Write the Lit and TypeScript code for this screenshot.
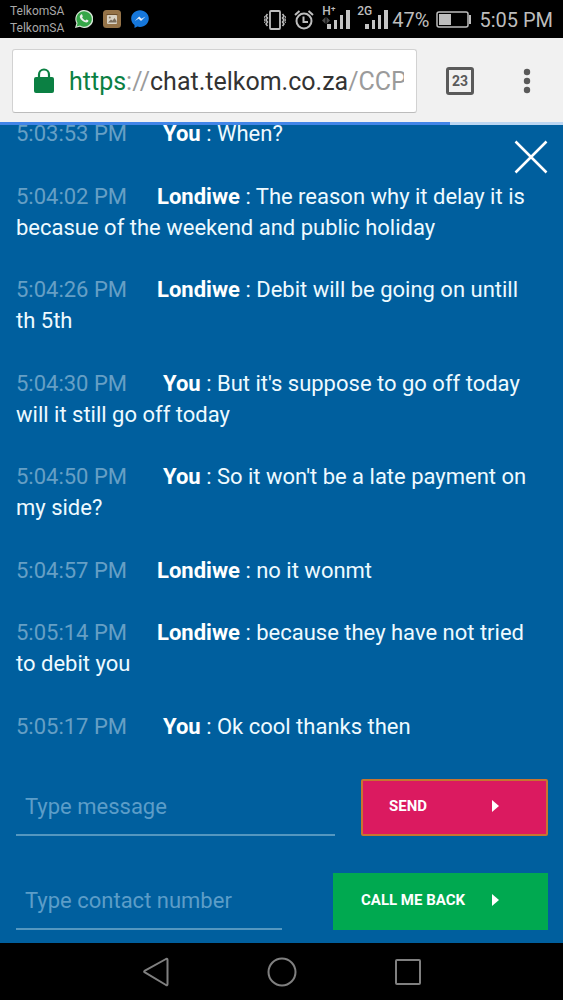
import { LitElement, html, css, svg } from "lit";
import { customElement } from "lit/decorators.js";

interface Message {
  time: string;
  from: string;
  text: string;
}

const MESSAGES: Message[] = [
  { time: "5:03:53 PM", from: "You", text: "When?" },
  { time: "5:04:02 PM", from: "Londiwe", text: "The reason why it delay it is becasue of the weekend and public holiday" },
  { time: "5:04:26 PM", from: "Londiwe", text: "Debit will be going on untill th 5th" },
  { time: "5:04:30 PM", from: "You", text: "But it's suppose to go off today will it still go off today" },
  { time: "5:04:50 PM", from: "You", text: "So it won't be a late payment on my side?" },
  { time: "5:04:57 PM", from: "Londiwe", text: "no it wonmt" },
  { time: "5:05:14 PM", from: "Londiwe", text: "because they have not tried to debit you" },
  { time: "5:05:17 PM", from: "You", text: "Ok cool thanks then" },
];

const signalBars = svg`<path fill="#c4c4c4" d="M0 14h4v5H0zM7 10h3v9H7zM13 5h3v14h-3zM19 0h4v19h-4z"/>`;

@customElement("status-bar")
export class StatusBar extends LitElement {
  static styles = css`
    :host {
      display: flex;
      align-items: center;
      height: 38px;
      padding: 0 10px;
      box-sizing: border-box;
      background: #000;
      color: #bdbdbd;
      font-size: 20px;
      line-height: 24px;
      white-space: nowrap;
    }
    svg { display: block; flex: none; }
    .carriers { font-size: 12px; line-height: 17px; color: #a8a8a8; padding-top: 2px; }
    .apps { display: flex; gap: 10px; margin-left: 11px; }
    .system { display: flex; align-items: center; margin-left: auto; padding-top: 1px; }
    .vibrate { margin-right: 8px; }
    .alarm { margin-right: 8px; }
    .cell { position: relative; padding: 0 0 0 5px; margin-right: 7px; }
    .cell.slow { padding-left: 8px; margin-right: 4px; }
    .net { position: absolute; left: 0; top: -5px; font-size: 12px; line-height: 12px; font-weight: 500; }
    .data { position: absolute; left: 0; top: 7px; }
    .battery { margin: 0 8px 0 7px; }
  `;

  render() {
    return html`
      <div class="carriers"><div>TelkomSA</div><div>TelkomSA</div></div>
      <div class="apps">
        <svg width="18" height="18" viewBox="0 0 18 18" aria-label="WhatsApp">
          <path fill="#d7e6d7" d="M0 18l1.4-4.7A9 9 0 1 1 4.800 16.800z"/>
          <path fill="#35a648" d="M1.600 16.400l1-3.300A7.700 7.700 0 1 1 5 15.500z"/>
          <path fill="#eee" d="M6.100 4.500c.5-.3.900-.2 1.100.3l.6 1.400c.1.400-.7 1-.6 1.300.7 1.400 1.800 2.300 3.200 2.900.4.100.9-1 1.200-.9l1.600.8c.4.200.2 1-.1 1.400-.8 1-2.200 1-3.600.4-2-.8-3.600-2.300-4.500-4.300-.5-1.200-.1-2.600 1.100-3.300z"/>
        </svg>
        <svg width="18" height="18" viewBox="0 0 18 18" aria-label="Gallery">
          <rect width="18" height="18" rx="3.500" fill="#957348"/>
          <rect x="3.500" y="4" width="11" height="1" fill="#6b4e2c"/>
          <rect x="4" y="5" width="10" height="9" rx="1" fill="#d9d2c4"/>
          <path fill="#7a6d5c" d="M5 12.500l3-3 1.500 1.300L11.500 8l2 3v1.500z"/>
          <circle cx="6.800" cy="7.500" r="1" fill="#8a7a62"/>
        </svg>
        <svg width="18" height="18" viewBox="0 0 18 18" aria-label="Messenger">
          <path fill="#1577dc" d="M9 .3c5 0 8.800 3.700 8.800 8.300S14 17 9 17c-.9 0-1.800-.1-2.600-.4L3.500 18v-2.900A8.200 8.200 0 0 1 .2 8.600C.2 4 4 .3 9 .3z"/>
          <path fill="#e6eefa" d="M3.800 11l4.400-4.600 2.300 2.300 4-2.300-4.500 4.700-2.300-2.300z"/>
        </svg>
      </div>
      <div class="system">
        <svg class="vibrate" width="22" height="20" viewBox="0 0 22 20" fill="none" stroke="#bdbdbd" aria-label="Vibrate">
          <rect x="6" y="1" width="10" height="18" rx="1" stroke-width="1.800"/>
          <path stroke-width="1.500" d="M3.500 4l-1.500 2 1.500 2-1.500 2 1.500 2-1.500 2 1.500 2M18.500 4l1.500 2-1.500 2 1.500 2-1.500 2 1.500 2-1.500 2"/>
          <path stroke-width="1" d="M1 6l-.5 1 .5 1.500-.5 1.500.5 1.500-.5 1.500M21 6l.5 1-.5 1.500.5 1.500-.5 1.500.5 1.500"/>
        </svg>
        <svg class="alarm" width="20" height="20" viewBox="0 0 20 20" fill="none" stroke="#bdbdbd" stroke-width="2" aria-label="Alarm">
          <circle cx="10" cy="11" r="7.500"/>
          <path d="M9.500 6.500V12H14M1 5l4.500-4M19 5l-4.500-4"/>
        </svg>
        <div class="cell">
          <svg width="23" height="19" viewBox="0 0 23 19" aria-label="Signal">${signalBars}</svg>
          <svg class="data" width="8" height="7" viewBox="0 0 8 7" fill="#4a4a4a" aria-hidden="true"><path d="M0 3.500L3.500 0v7zM8 3.500L4.500 0v7z"/></svg>
          <span class="net">H⁺</span>
        </div>
        <div class="cell slow">
          <svg width="23" height="19" viewBox="0 0 23 19" aria-label="Signal">${signalBars}</svg>
          <span class="net">2G</span>
        </div>
        <span>47%</span>
        <svg class="battery" width="35" height="17" viewBox="0 0 35 17" aria-label="Battery">
          <rect x="1" y="1" width="31" height="15" rx="2" fill="none" stroke="#bdbdbd" stroke-width="1.500"/>
          <path fill="#bdbdbd" d="M3 3h12v11H3zM33 4h2v9h-2z"/>
        </svg>
        <span>5:05 PM</span>
      </div>
    `;
  }
}

@customElement("browser-bar")
export class BrowserBar extends LitElement {
  static styles = css`
    :host { display: block; background: #f1f1f1; }
    .row { display: flex; align-items: center; height: 82px; padding: 2px 12px 0; }
    .address {
      flex: 1;
      min-width: 0;
      display: flex;
      align-items: center;
      height: 62px;
      border: 1px solid #d2d2d2;
      border-bottom-color: #bcbcbc;
      border-radius: 3px;
      background: #fff;
      padding: 0 12px 0 21px;
    }
    svg { display: block; flex: none; }
    .url {
      flex: 1;
      min-width: 0;
      margin-left: 15px;
      overflow: hidden;
      white-space: nowrap;
      font-size: 25px;
      line-height: 36px;
      padding-top: 2px;
      color: #9b9b9b;
      text-decoration: none;
    }
    .scheme { color: #0b8043; }
    .host { color: #333; }
    button {
      border: 0;
      padding: 0;
      background: none;
      font: inherit;
      color: #5a5a5a;
      flex: none;
    }
    .tabs {
      width: 28px;
      height: 28px;
      margin-left: 29px;
      box-sizing: border-box;
      border: 3px solid #5a5a5a;
      border-radius: 3px;
      font-size: 14px;
      line-height: 22px;
      font-weight: 700;
    }
    .menu { margin: 0 20px 0 49px; }
    progress {
      display: block;
      width: 100%;
      height: 3px;
      border: 0;
      appearance: none;
      background: #bcd6f2;
    }
    progress::-webkit-progress-bar { background: #bcd6f2; }
    progress::-webkit-progress-value { background: #4285e8; }
  `;

  render() {
    return html`
      <div class="row">
        <div class="address">
          <svg width="20" height="26" viewBox="0 0 20 26" aria-label="Secure">
            <rect x="0" y="9" width="20" height="16" rx="2" fill="#0b8043"/>
            <path d="M5 10V6.500a5 5 0 0 1 10 0V10" fill="none" stroke="#0b8043" stroke-width="2.200"/>
          </svg>
          <a class="url" href="#"><span class="scheme">https</span>://<span class="host">chat.telkom.co.za</span>/CCP</a>
        </div>
        <button class="tabs" aria-label="23 open tabs">23</button>
        <button class="menu" aria-label="Menu">
          <svg width="8" height="26" viewBox="0 0 8 26" fill="#5a5a5a">
            <circle cx="4" cy="4" r="3.200"/><circle cx="4" cy="13" r="3.200"/><circle cx="4" cy="22" r="3.200"/>
          </svg>
        </button>
      </div>
      <progress max="100" value="80" aria-label="Page loading"></progress>
    `;
  }
}

@customElement("chat-panel")
export class ChatPanel extends LitElement {
  static styles = css`
    :host {
      position: relative;
      display: flex;
      flex-direction: column;
      min-height: 0;
      background: #005f9e;
      color: #eefaff;
      overflow: hidden;
    }
    button, input { font: inherit; }
    .close {
      position: absolute;
      top: 15px;
      right: 15px;
      border: 0;
      padding: 0;
      background: none;
    }
    svg { display: block; flex: none; }
    .log {
      flex: 1;
      display: flex;
      flex-direction: column;
      justify-content: space-between;
      margin: -7px 0 0;
      padding: 0 24px 0 16px;
      list-style: none;
      font-size: 22px;
      line-height: 31px;
    }
    .time { color: #669fc5; margin-right: 30px; }
    .own { margin-right: 36px; }
    .name { font-weight: 700; color: #fff; }
    .forms { display: flex; flex-direction: column; gap: 37px; padding: 37px 15px 13px 16px; }
    form { display: flex; align-items: flex-start; }
    input {
      flex: 1;
      min-width: 0;
      height: 57px;
      box-sizing: border-box;
      border: 0;
      border-bottom: 2px solid #5497c0;
      border-radius: 0;
      padding: 0 9px;
      background: none;
      color: #eefaff;
      font-size: 22px;
      outline: none;
    }
    input::placeholder { color: #5c9dc8; opacity: 1; }
    .action {
      display: flex;
      justify-content: space-between;
      align-items: center;
      height: 57px;
      box-sizing: border-box;
      border: 2px solid #00a950;
      padding: 0 47px 4px 26px;
      background: #00a950;
      color: #fff;
      font-size: 15px;
      font-weight: 700;
    }
    .call { width: 215px; margin-left: 51px; }
    .send {
      width: 187px;
      margin-left: 26px;
      background: #db1a60;
      border-color: #c8742f;
      border-radius: 2px;
    }
  `;

  private arrow() {
    return html`<svg width="7" height="12" viewBox="0 0 7 12" aria-hidden="true"><path d="M0 0l7 6-7 6z" fill="#fff"/></svg>`;
  }

  private hold(e: Event) {
    e.preventDefault();
  }

  render() {
    return html`
      <ul class="log">
        ${MESSAGES.map(
          (m) => html`<li><span class="time ${m.from === "You" ? "own" : ""}">${m.time}</span><span class="name">${m.from}</span> : ${m.text}</li>`,
        )}
      </ul>
      <div class="forms">
        <form @submit=${this.hold}>
          <input type="text" placeholder="Type message" aria-label="Type message" />
          <button class="action send">SEND ${this.arrow()}</button>
        </form>
        <form @submit=${this.hold}>
          <input type="tel" placeholder="Type contact number" aria-label="Type contact number" />
          <button class="action call">CALL ME BACK ${this.arrow()}</button>
        </form>
      </div>
      <button class="close" aria-label="Close chat">
        <svg width="34" height="34" viewBox="0 0 34 34" stroke="#fff" stroke-width="2.500"><path d="M1.500 1.500l31 31M32.500 1.500l-31 31"/></svg>
      </button>
    `;
  }
}

@customElement("nav-bar")
export class NavBar extends LitElement {
  static styles = css`
    :host {
      display: flex;
      justify-content: center;
      gap: 97px;
      align-items: center;
      height: 57px;
      background: #000;
    }
    button { border: 0; padding: 0; background: none; }
    svg { display: block; fill: none; stroke: #808080; stroke-width: 2; stroke-linejoin: round; }
  `;

  render() {
    return html`
      <button aria-label="Back"><svg width="28" height="30" viewBox="0 0 28 30"><path d="M2.500 15.200Q1.800 14.500 2.500 13.900L24 2q1.500-.6 1.500 1v24q0 1.600-1.500 1z"/></svg></button>
      <button aria-label="Home"><svg width="30" height="30" viewBox="0 0 30 30"><circle cx="15" cy="15" r="13.500"/></svg></button>
      <button aria-label="Recent apps"><svg width="28" height="28" viewBox="0 0 28 28"><rect x="2" y="2" width="24" height="24" rx="1"/></svg></button>
    `;
  }
}

@customElement("app-root")
export class AppRoot extends LitElement {
  static styles = css`
    :host {
      display: flex;
      flex-direction: column;
      height: 100vh;
      font-family: Roboto, "Liberation Sans", sans-serif;
    }
    status-bar, browser-bar, nav-bar { flex: none; }
    chat-panel { flex: 1; }
  `;

  render() {
    return html`
      <status-bar></status-bar>
      <browser-bar></browser-bar>
      <chat-panel></chat-panel>
      <nav-bar></nav-bar>
    `;
  }
}
